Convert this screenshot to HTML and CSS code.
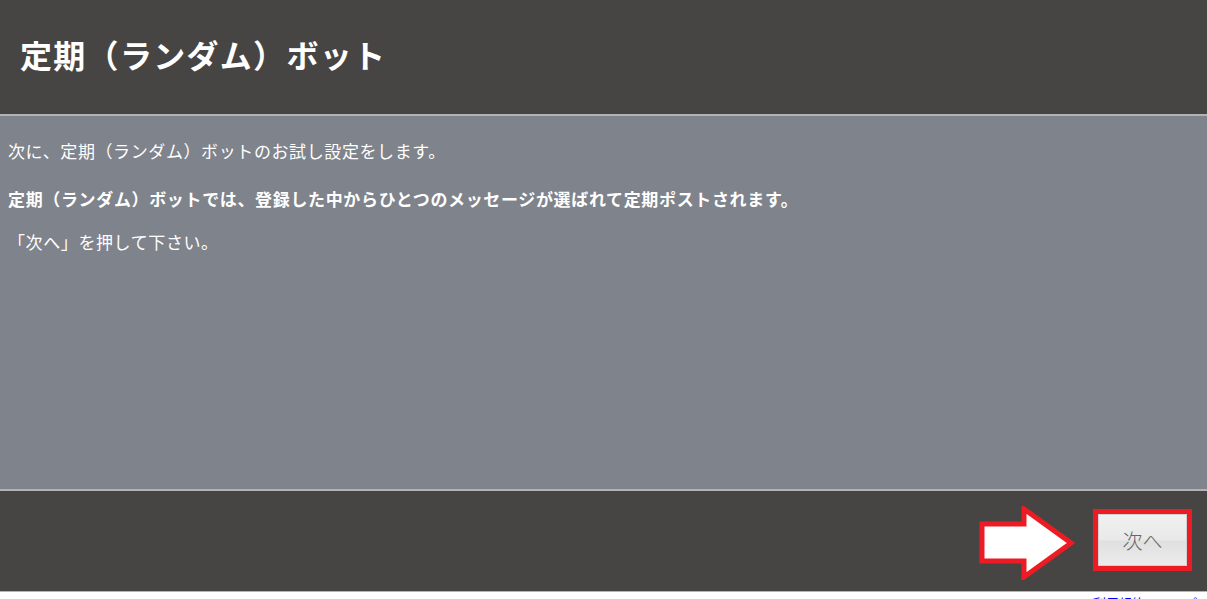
FILE: index.html
```html
<!DOCTYPE html>
<html lang="ja">
<head>
<meta charset="utf-8">
<title>定期（ランダム）ボット</title>
<link rel="stylesheet" href="styles.css">
</head>
<body>
<div class="dialog">
  <header class="dlg-header">
    <h1 class="dlg-title">定期（ランダム）ボット</h1>
  </header>
  <main class="dlg-body">
    <p class="msg msg-first">次に、定期（ランダム）ボットのお試し設定をします。</p>
    <p class="msg msg-bold">定期（ランダム）ボットでは、登録した中からひとつのメッセージが選ばれて定期ポストされます。</p>
    <p class="msg">「次へ」を押して下さい。</p>
  </main>
  <footer class="dlg-footer">
    <svg class="arrow" width="96" height="74" viewBox="0 0 96 74" aria-hidden="true">
      <polygon points="3,18 45,18 45,3 92,37 45,71 45,55 3,55" fill="#ffffff" stroke="#ed1c24" stroke-width="5" stroke-linejoin="miter"/>
    </svg>
    <div class="btn-frame">
      <button class="btn-next" type="button">次へ</button>
    </div>
  </footer>
</div>
<div class="below"><a class="below-link" href="#">利用規約・ヘルプ</a></div>
</body>
</html>
```
FILE: styles.css
```css
html, body {
  margin: 0;
  padding: 0;
  background: #ffffff;
}
body {
  font-family: "Noto Sans CJK JP", "Noto Sans", sans-serif;
  color: #ffffff;
}
.dialog {
  display: flex;
  flex-direction: column;
}
.dlg-header {
  height: 114px;
  background: #474543;
  border-bottom: 2px solid #b3b3b3;
  display: flex;
  align-items: center;
  padding-left: 20px;
}
.dlg-title {
  margin: 0;
  font-size: 32px;
  font-weight: 700;
  line-height: 1;
  letter-spacing: 1.3px;
  color: #ffffff;
  position: relative;
  top: -3px;
}
.dlg-body {
  height: 375px;
  box-sizing: border-box;
  background: #7f838b;
  border-bottom: 2px solid #b3b3b3;
  padding: 23px 8px 0;
}
.msg {
  margin: 0 0 21px;
  font-size: 17px;
  line-height: 24px;
  color: #ffffff;
  letter-spacing: 0.6px;
}
.msg-first {
  margin-bottom: 24px;
}
.msg-bold {
  font-weight: 700;
  letter-spacing: 0.65px;
  margin-bottom: 19px;
}
.dlg-footer {
  height: 100px;
  background: #474543;
  border-bottom: 1px solid #b3b3b3;
  display: flex;
  justify-content: flex-end;
  align-items: center;
  gap: 18px;
  padding-right: 15px;
}
.arrow {
  display: block;
  margin-top: 4px;
}
.btn-frame {
  border: 5px solid #ed1c24;
  width: 89px;
  height: 52px;
  margin-top: -2px;
}
.btn-next {
  display: block;
  width: 100%;
  height: 100%;
  margin: 0;
  border: 1px solid #d0d0d0;
  background: linear-gradient(#f0f0f0, #e9e9e9 50%, #e0e0e0 52%, #ececec);
  color: #666666;
  font-family: "Noto Sans CJK JP", sans-serif;
  font-size: 20px;
  font-weight: 300;
  padding: 0;
}
.below {
  display: flex;
  justify-content: flex-end;
  padding-right: 10px;
  height: 20px;
  margin-top: 3px;
}
.below-link {
  color: #0000ee;
  font-size: 13px;
  line-height: 16px;
  text-decoration: none;
}
```
